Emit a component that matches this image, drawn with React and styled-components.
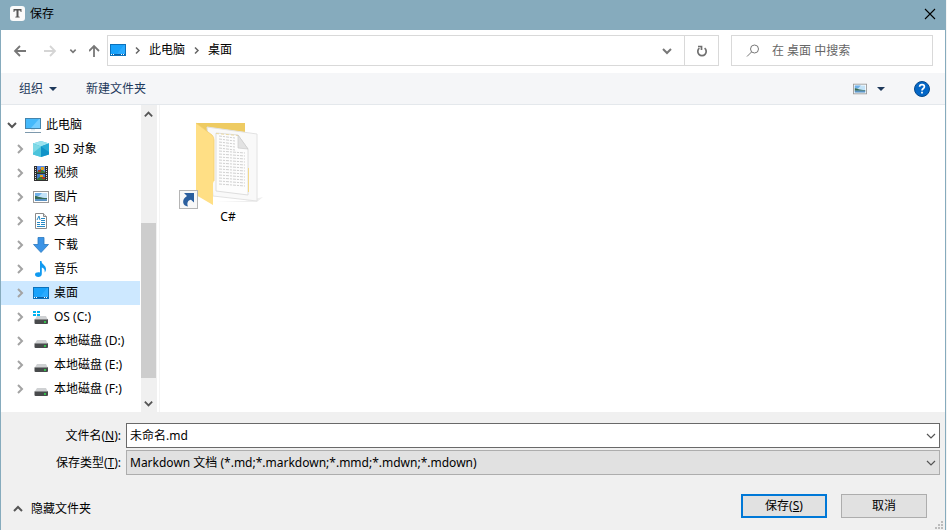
import React from 'react';
import styled, { createGlobalStyle } from 'styled-components';

const GlobalStyle = createGlobalStyle`
  * {
    box-sizing: border-box;
  }
  body {
    margin: 0;
    background: #f4f4f4;
  }
  body, button, input, select {
    font-family: 'Noto Sans', 'Noto Sans CJK SC', sans-serif;
    font-size: 12px;
    line-height: 16px;
    color: #000000;
  }
  svg {
    display: block;
    flex-shrink: 0;
  }
`;

const Dialog = styled.div`
  display: flex;
  flex-direction: column;
  min-height: 100vh;
  margin-right: 1px;
  border: solid #86abbd;
  border-width: 0 1px;
  background: #ffffff;
`;

const PlainButton = styled.button`
  display: flex;
  align-items: center;
  justify-content: center;
  padding: 0;
  border: none;
  background: none;
`;

const TitleBar = styled.header`
  display: flex;
  align-items: center;
  height: 30px;
  padding: 0 8px 2px;
  background: #86abbd;
`;

const Title = styled.h1`
  flex: 1;
  margin: 0 0 0 5px;
  font-size: 12px;
  font-weight: normal;
`;

const NavRow = styled.nav`
  display: flex;
  align-items: center;
  height: 43px;
  padding: 0 12px 2px;
`;

const History = styled.div`
  display: flex;
  align-items: center;
  width: 94px;
  gap: 12px;
`;

const AddressBar = styled.div`
  display: flex;
  flex: 1;
  align-items: center;
  height: 31px;
  padding-left: 2px;
  border: 1px solid #d9d9d9;
`;

const Crumbs = styled.div`
  display: flex;
  flex: 1;
  align-items: center;
  padding-bottom: 1px;
  gap: 7px;
`;

const Crumb = styled.a`
  color: #000000;
  text-decoration: none;
`;

const AddressButton = styled(PlainButton)`
  width: 34px;
  height: 29px;
  border-left: ${(props) => (props.$divided ? '1px solid #d9d9d9' : 'none')};
`;

const SearchBox = styled.label`
  display: flex;
  align-items: center;
  width: 202px;
  height: 31px;
  margin-left: 12px;
  padding-left: 14px;
  gap: 12px;
  border: 1px solid #d9d9d9;
`;

const SearchInput = styled.input`
  flex: 1;
  min-width: 0;
  padding: 0;
  border: none;
  outline: none;
  &::placeholder {
    color: #666666;
    opacity: 1;
  }
`;

const Toolbar = styled.div`
  display: flex;
  align-items: center;
  height: 32px;
  padding: 0 15px 0 18px;
  gap: 29px;
  border-bottom: 1px solid #e4e8ec;
  background: #f5f6f8;
`;

const ToolButton = styled(PlainButton)`
  gap: ${(props) => props.$gap || 0}px;
  color: #1e395b;
`;

const Spacer = styled.div`
  flex: 1;
`;

const Body = styled.div`
  display: flex;
  flex: 1;
`;

const Sidebar = styled.aside`
  width: 139px;
  padding-top: 8px;
`;

const Tree = styled.ul`
  margin: 0;
  padding: 0;
  list-style: none;
`;

const TreeRow = styled.li`
  display: flex;
  align-items: center;
  height: 24px;
  padding-left: ${(props) => (props.$root ? 5 : 13)}px;
  gap: 5px;
  background: ${(props) => (props.$selected ? '#cde8ff' : 'transparent')};
  white-space: nowrap;
`;

const Toggle = styled(PlainButton)`
  width: 12px;
  height: 16px;
  margin-right: 2px;
`;

const ScrollBar = styled.div`
  display: flex;
  flex-direction: column;
  width: 16px;
  margin-left: 1px;
  background: #f0f0f0;
`;

const ScrollButton = styled(PlainButton)`
  height: 18px;
  padding-right: 2px;
`;

const Track = styled.div`
  display: flex;
  flex: 1;
  flex-direction: column;
  padding-right: 1px;
`;

const TrackPart = styled.div`
  flex: ${(props) => props.$grow};
  background: ${(props) => (props.$thumb ? '#cdcdcd' : 'transparent')};
`;

const Files = styled.main`
  flex: 1;
  margin-left: 2px;
  padding: 10px 19px;
  border-left: 1px solid #f4f4f4;
`;

const FileItem = styled.figure`
  width: 98px;
  margin: 0;
  text-align: center;
`;

const Footer = styled.footer`
  padding: 11px 5px 0;
  background: #f0f0f0;
`;

const Field = styled.div`
  display: grid;
  grid-template-columns: 115px 1fr;
  align-items: center;
  column-gap: 5px;
  margin-bottom: 2px;
`;

const FieldLabel = styled.label`
  text-align: right;
`;

const Combo = styled.div`
  display: flex;
  align-items: center;
  height: 25px;
  border: 1px solid ${(props) => (props.$filled ? '#adadad' : '#696969')};
  background: ${(props) => (props.$filled ? '#e1e1e1' : '#ffffff')};
`;

const NameInput = styled.input`
  flex: 1;
  height: 22px;
  padding: 0 3px 2px;
  border: none;
  outline: none;
`;

const ComboButton = styled(PlainButton)`
  width: 17px;
  height: 22px;
`;

const TypeSelect = styled.select`
  flex: 1;
  height: 23px;
  margin-right: -17px;
  padding: 0 20px 0 3px;
  border: none;
  outline: none;
  appearance: none;
  background: transparent;
`;

const Arrow = styled.span`
  display: flex;
  justify-content: center;
  width: 17px;
  pointer-events: none;
`;

const Actions = styled.div`
  display: flex;
  align-items: center;
  height: 53px;
  padding: 5px 13px 0 6px;
  gap: 14px;
`;

const FolderToggle = styled(PlainButton)`
  margin-top: 6px;
  gap: 7px;
`;

const ActionButton = styled.button`
  width: 86px;
  height: 24px;
  padding: 0 0 1px;
  border: ${(props) => (props.$primary ? '2px solid #0078d7' : '1px solid #adadad')};
  background: #e1e1e1;
`;

const Grip = styled.div`
  position: absolute;
  right: 4px;
  bottom: 1px;
`;

const chevrons = {
  up: 'M2 8 L6 4 L10 8',
  down: 'M2 4 L6 8 L10 4',
  right: 'M4 2 L8 6 L4 10',
};

const Chevron = ({ dir, size = 12, color = '#555555', weight = 2 }) => (
  <svg width={size} height={size} viewBox="0 0 12 12" fill="none" stroke={color} strokeWidth={weight}>
    <path d={chevrons[dir]} />
  </svg>
);

const Caret = () => (
  <svg width="8" height="4" viewBox="0 0 8 4">
    <path d="M0 0h8L4 4z" fill="#1e395b" />
  </svg>
);

const AppIcon = () => (
  <svg width="16" height="16" viewBox="0 0 16 16">
    <rect x="1" y="0" width="15" height="15" rx="3" fill="#fafafa" />
    <path d="M4.500 3h8v3h-.8l-.5-1.600H9.500v6l1.200.4v.7H6.300v-.7l1.200-.4v-6H5.800L5.300 6h-.8z" fill="#555555" />
  </svg>
);

const Arrow16 = ({ d, color = '#777777' }) => (
  <svg width="16" height="16" viewBox="0 0 16 16" fill="none" stroke={color} strokeWidth="1.800">
    <path d={d} />
  </svg>
);

const DesktopIcon = () => (
  <svg width="16" height="16" viewBox="0 0 16 16">
    <rect x=".5" y="2.500" width="15" height="11" fill="#18a2fb" stroke="#0b71bb" />
    <path d="M7 12 14 3h1v9z" fill="#2aabff" />
    <path d="M1 12.500h14" stroke="#0d5fa3" />
    <path d="M1 12.500h1M3 12.500h1M11 12.500h1M13 12.500h1" stroke="#ffffff" />
  </svg>
);

const ComputerIcon = () => (
  <svg width="16" height="16" viewBox="0 0 16 16">
    <rect x=".5" y="1.500" width="15" height="10" fill="#45b9fb" stroke="#4484ac" />
    <path d="M6 11 14 2h1v9z" fill="#74cdff" />
    <path d="M6 12h4v1.500H6z" fill="#dceaf2" />
    <path d="M0 15.500h16" stroke="#7d99ad" />
  </svg>
);

const CubeIcon = () => (
  <svg width="16" height="16" viewBox="0 0 16 16">
    <path d="M8 0l8 2.500v11L8 16 0 13.500v-11z" fill="#55c6e0" />
    <path d="M8 0l8 2.500L8 5.500 0 2.500z" fill="#9be3ef" />
    <path d="M0 2.500l8 3V16l-8-2.500z" fill="#4cc4dc" />
    <path d="M16 2.500l-8 3V16l8-2.500z" fill="#1193c8" />
    <path d="M0 2.500l8 3L0 12z" fill="#7ed9e6" />
    <path d="M16 2.500l-8 3L16 11z" fill="#27acd6" />
  </svg>
);

const VideoIcon = () => (
  <svg width="16" height="16" viewBox="0 0 16 16">
    <path d="M1 1h14v15H1z" fill="#303030" />
    <path d="M4 1h8v7H4z" fill="#5a8de0" />
    <path d="M4 9h8v6H4z" fill="#427cca" />
    <path d="M4 7 8 4l4 3v1H4zM4 14l4-3 4 2v2H4z" fill="#3c7637" />
    <path d="M8 2h3v3H8zM7 10h3v2H7z" fill="#e8a31c" />
    <path d="M5 5h3v2H5zM9 12h3v2H9z" fill="#a63625" />
    <path d="M2.500 2v14M13.500 2v14" stroke="#dddddd" strokeDasharray="1 1" />
  </svg>
);

const PictureIcon = ({ width = 16 }) => (
  <svg width={width} height={width} viewBox="0 0 16 16">
    <rect x=".5" y="2.500" width="15" height="11" fill="#ffffff" stroke="#999999" />
    <path d="M2 4h12v8H2z" fill="#c3e3f8" />
    <path d="M2 4h7L6 7H2z" fill="#6fb0e8" />
    <path d="M2 7c3 0 5 2 12 2v1H2z" fill="#376b57" />
    <path d="M2 10h12v2H2z" fill="#5b93c4" />
  </svg>
);

const DocumentIcon = () => (
  <svg width="16" height="16" viewBox="0 0 16 16">
    <path d="M2.500.5h8l3 3v12h-11z" fill="#ffffff" stroke="#8a8a8a" />
    <path d="M10.500.5v3h3" fill="#dddddd" stroke="#8a8a8a" />
    <path d="M4 7 6 3l1 4M8 5.500h4M8 7.500h4M4 9.500h3M8 9.500h4M4 11.500h3M8 11.500h4M4 13.500h8" fill="none" stroke="#2689c5" />
  </svg>
);

const DownloadIcon = () => (
  <svg width="16" height="16" viewBox="0 0 16 16">
    <path d="M5 .5h6v7h4.500L8 15.500.5 7.500H5z" fill="#3c94e6" stroke="#2a78bf" strokeWidth=".8" />
  </svg>
);

const MusicIcon = () => (
  <svg width="16" height="16" viewBox="0 0 16 16">
    <path d="M7 0h1.500c0 3.500 4.500 4 4.500 8 0 1.500-.5 2.500-1.300 3.500C12 8 10.500 7 8.800 6.500V13c0 2-1.500 3-3.500 3S2 15 2 13.500 4 11 7 11.500z" fill="#119af0" />
  </svg>
);

const DriveIcon = ({ system }) => (
  <svg width="16" height="16" viewBox="0 0 16 16">
    <path d="M4 7h9l2 4H1.500z" fill="#cfd1d3" />
    <rect x="1.500" y="10" width="13.500" height="5" rx="1" fill="#484a4c" />
    <path d="M2 10.500h12.500" stroke="#8a8c8e" />
    <path d="M11 13h2" stroke="#2ee64b" strokeWidth="1.500" />
    {system && <path d="M0 2h3v2H0zM4 2h3v2H4zM0 5h3v2H0zM4 5h3v2H4z" fill="#00b3f0" />}
  </svg>
);

const HelpIcon = () => (
  <svg width="16" height="16" viewBox="0 0 16 16">
    <circle cx="8" cy="8" r="7.500" fill="#0467c6" stroke="#06488a" />
    <path d="M5.600 5.800C5.700 2.900 10.400 3 10.400 5.700 10.400 7.500 8 7.500 8 9.600" fill="none" stroke="#ffffff" strokeWidth="1.700" />
    <path d="M7.100 10.800h1.800v1.800H7.100z" fill="#ffffff" />
  </svg>
);

const textLines = Array.from({ length: 17 }, (_, i) => 21 + i * 3);

const FolderShortcut = () => (
  <svg width="98" height="94" viewBox="0 0 98 94">
    <path d="M66 86 84 82 78 87 36 87z" fill="#efefef" />
    <path d="M17 8h49v60H34z" fill="#eecb62" />
    <path d="M28 12 78 19v67L34 81z" fill="#f9f9f9" stroke="#e2e2e2" />
    <path d="M37 18 59 20 69 34V80L37 76z" fill="#fdfdfd" stroke="#d6d6d6" strokeWidth=".8" />
    <path d="M37 18.500 59 20.500" stroke="#ead9a4" strokeDasharray="3 2" />
    {textLines.map((y) => (
      <path
        key={y}
        d={`M40 ${y}L${y < 36 ? 56 : 66} ${y + 2}`}
        stroke="#d0d0d0"
        strokeDasharray="3 1 2 1"
      />
    ))}
    <path d="M59 20 69 34 59 33z" fill="#e2e2e2" stroke="#cacaca" strokeWidth=".7" />
    <path d="M69.500 53v24" stroke="#f3d98a" />
    <path d="M17 8 33 20Q35 22 35 25V66L34 68V90L17 80z" fill="#ffdf85" />
    <path d="M17 8 33 20Q35 22 35 25V66" fill="none" stroke="#f3ce70" strokeWidth=".8" />
    <rect x=".5" y="75.500" width="18" height="18" fill="#f8f8f8" stroke="#b5b5b5" />
    <path d="M5 78h10v9.500l-3-2.800C9 85 7.500 88 9 91.500 3.500 91 2 84.500 8 81z" fill="#2b5f9e" />
  </svg>
);

const places = [
  { name: '3D 对象', icon: <CubeIcon /> },
  { name: '视频', icon: <VideoIcon /> },
  { name: '图片', icon: <PictureIcon /> },
  { name: '文档', icon: <DocumentIcon /> },
  { name: '下载', icon: <DownloadIcon /> },
  { name: '音乐', icon: <MusicIcon /> },
  { name: '桌面', icon: <DesktopIcon />, selected: true },
  { name: 'OS (C:)', icon: <DriveIcon system /> },
  { name: '本地磁盘 (D:)', icon: <DriveIcon /> },
  { name: '本地磁盘 (E:)', icon: <DriveIcon /> },
  { name: '本地磁盘 (F:)', icon: <DriveIcon /> },
];

const App = () => {
  return (
    <Dialog role="dialog" aria-label="保存">
      <GlobalStyle />

      <TitleBar>
        <AppIcon />
        <Title>保存</Title>
        <PlainButton aria-label="关闭">
          <svg width="14" height="14" viewBox="0 0 14 14" stroke="#000000" strokeWidth="1.100">
            <path d="M2 2l10 10M12 2 2 12" />
          </svg>
        </PlainButton>
      </TitleBar>

      <NavRow>
        <History>
          <PlainButton aria-label="后退"><Arrow16 d="M13 8H2M7 3 2 8l5 5" /></PlainButton>
          <PlainButton aria-label="前进"><Arrow16 d="M3 8h11M9 3l5 5-5 5" color="#d5d5d5" /></PlainButton>
          <PlainButton aria-label="最近"><Chevron dir="down" size={8} color="#777777" weight={2.4} /></PlainButton>
          <PlainButton aria-label="上移"><Arrow16 d="M5 14V3M0 8l5-5 5 5" /></PlainButton>
        </History>
        <AddressBar>
          <Crumbs>
            <DesktopIcon />
            <Chevron dir="right" size={9} color="#666666" />
            <Crumb href="#computer">此电脑</Crumb>
            <Chevron dir="right" size={9} color="#666666" />
            <Crumb href="#desktop">桌面</Crumb>
          </Crumbs>
          <AddressButton aria-label="展开"><Chevron dir="down" color="#777777" /></AddressButton>
          <AddressButton $divided aria-label="刷新">
            <svg width="12" height="12" viewBox="0 0 12 12" fill="none" stroke="#707070" strokeWidth="1.700">
              <path d="M8.600 3.200A4.200 4.200 0 1 1 3.400 3.200M2 1.500h3.500V5" />
            </svg>
          </AddressButton>
        </AddressBar>
        <SearchBox>
          <svg width="14" height="14" viewBox="0 0 14 14" fill="none" stroke="#777777">
            <circle cx="8.500" cy="5" r="4" />
            <path d="M5.500 8 1 12.500" />
          </svg>
          <SearchInput placeholder="在 桌面 中搜索" aria-label="搜索" />
        </SearchBox>
      </NavRow>

      <Toolbar>
        <ToolButton $gap={6}>组织<Caret /></ToolButton>
        <ToolButton>新建文件夹</ToolButton>
        <Spacer />
        <ToolButton $gap={10} aria-label="视图"><PictureIcon width={14} /><Caret /></ToolButton>
        <PlainButton aria-label="帮助"><HelpIcon /></PlainButton>
      </Toolbar>

      <Body>
        <Sidebar>
          <Tree>
            <TreeRow $root>
              <Toggle aria-label="折叠"><Chevron dir="down" /></Toggle>
              <ComputerIcon />
              此电脑
            </TreeRow>
            {places.map((place) => (
              <TreeRow key={place.name} $selected={place.selected}>
                <Toggle aria-label="展开"><Chevron dir="right" color="#a3a3a3" /></Toggle>
                {place.icon}
                {place.name}
              </TreeRow>
            ))}
          </Tree>
        </Sidebar>
        <ScrollBar>
          <ScrollButton aria-label="向上"><Chevron dir="up" size={11} /></ScrollButton>
          <Track>
            <TrackPart $grow={100} />
            <TrackPart $grow={155} $thumb />
            <TrackPart $grow={16} />
          </Track>
          <ScrollButton aria-label="向下"><Chevron dir="down" size={11} /></ScrollButton>
        </ScrollBar>
        <Files>
          <FileItem>
            <FolderShortcut />
            <figcaption>C#</figcaption>
          </FileItem>
        </Files>
      </Body>

      <Footer>
        <Field>
          <FieldLabel htmlFor="file-name">文件名(<u>N</u>):</FieldLabel>
          <Combo>
            <NameInput id="file-name" defaultValue="未命名.md" />
            <ComboButton aria-label="历史记录"><Chevron dir="down" weight={1.2} /></ComboButton>
          </Combo>
        </Field>
        <Field>
          <FieldLabel htmlFor="file-type">保存类型(<u>T</u>):</FieldLabel>
          <Combo $filled>
            <TypeSelect id="file-type">
              <option>Markdown 文档 (*.md;*.markdown;*.mmd;*.mdwn;*.mdown)</option>
            </TypeSelect>
            <Arrow><Chevron dir="down" weight={1.2} /></Arrow>
          </Combo>
        </Field>
        <Actions>
          <FolderToggle><Chevron dir="up" />隐藏文件夹</FolderToggle>
          <Spacer />
          <ActionButton $primary>保存(<u>S</u>)</ActionButton>
          <ActionButton>取消</ActionButton>
        </Actions>
      </Footer>
      <Grip>
        <svg width="8" height="8" viewBox="0 0 8 8" fill="#bcbcbc">
          <path d="M6 0h2v2H6zM3 3h2v2H3zM6 3h2v2H6zM0 6h2v2H0zM3 6h2v2H3zM6 6h2v2H6z" />
        </svg>
      </Grip>
    </Dialog>
  );
};

export default App;
